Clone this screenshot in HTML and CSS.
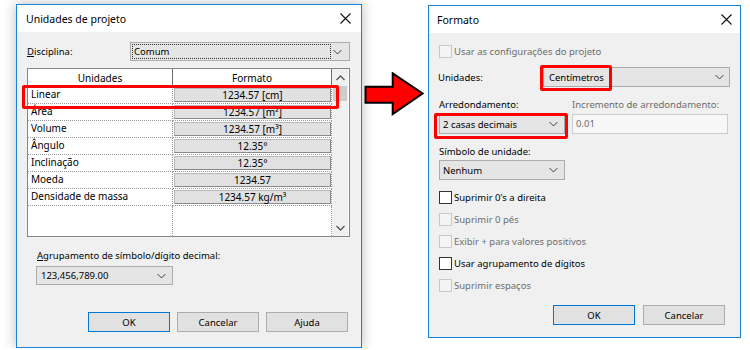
FILE: index.html
```html
<!DOCTYPE html>
<html lang="pt">
<head>
    <meta charset="UTF-8">
    <meta name="viewport" content="width=device-width, initial-scale=1.0">
    <title>Unidades de projeto</title>
    <link rel="stylesheet" href="styles.css">
</head>
<body>
    <div class="stage">

        <!-- Project units dialog -->
        <section class="dialog units-dialog">
            <div class="titlebar">
                <span class="title">Unidades de projeto</span>
                <svg class="close" width="11" height="11" viewBox="0 0 11 11"><path d="M0.5 0.5L10.5 10.5M10.5 0.5L0.5 10.5" stroke="#111" stroke-width="1.1"/></svg>
            </div>
            <div class="units-body">
                <div class="discipline-row">
                    <span class="discipline-label"><u>D</u>isciplina:</span>
                    <div class="select discipline-select">
                        <span class="focus-text">Comum</span>
                        <span class="chevron-box"><svg class="chevron" width="9" height="6" viewBox="0 0 9 6"><path d="M0.5 1L4.5 5L8.5 1" fill="none" stroke="#444"/></svg></span>
                    </div>
                </div>

                <!-- Units table -->
                <div class="grid">
                    <div class="grid-cols">
                        <div class="grid-head">
                            <div class="head-cell name-col">Unidades</div>
                            <div class="head-cell fmt-col">Formato</div>
                        </div>
                        <div class="grid-row"><div class="name-cell">Linear</div><div class="fmt-cell"><span class="fmt-btn">1234.57 [cm]</span></div></div>
                        <div class="grid-row"><div class="name-cell">Área</div><div class="fmt-cell"><span class="fmt-btn">1234.57 [m²]</span></div></div>
                        <div class="grid-row"><div class="name-cell">Volume</div><div class="fmt-cell"><span class="fmt-btn">1234.57 [m³]</span></div></div>
                        <div class="grid-row"><div class="name-cell">Ângulo</div><div class="fmt-cell"><span class="fmt-btn">12.35°</span></div></div>
                        <div class="grid-row"><div class="name-cell">Inclinação</div><div class="fmt-cell"><span class="fmt-btn">12.35°</span></div></div>
                        <div class="grid-row"><div class="name-cell">Moeda</div><div class="fmt-cell"><span class="fmt-btn">1234.57</span></div></div>
                        <div class="grid-row"><div class="name-cell">Densidade de massa</div><div class="fmt-cell"><span class="fmt-btn">1234.57 kg/m³</span></div></div>
                        <div class="grid-fill"><div class="name-cell"></div><div class="fmt-cell"></div></div>
                    </div>
                    <div class="scrollbar">
                        <span class="scroll-btn"><svg width="9" height="6" viewBox="0 0 9 6"><path d="M0.5 5L4.5 1L8.5 5" fill="none" stroke="#555" stroke-width="1.3"/></svg></span>
                        <span class="thumb"></span>
                        <span class="track"></span>
                        <span class="scroll-btn"><svg width="9" height="6" viewBox="0 0 9 6"><path d="M0.5 1L4.5 5L8.5 1" fill="none" stroke="#555" stroke-width="1.3"/></svg></span>
                    </div>
                    <div class="mark linear-mark"></div>
                </div>

                <div class="group-label"><u>A</u>grupamento de símbolo/dígito decimal:</div>
                <div class="select group-select">
                    <span class="select-text">123,456,789.00</span>
                    <svg class="chevron" width="9" height="6" viewBox="0 0 9 6"><path d="M0.5 1L4.5 5L8.5 1" fill="none" stroke="#444"/></svg>
                </div>

                <div class="buttons">
                    <button class="btn default">OK</button>
                    <button class="btn">Cancelar</button>
                    <button class="btn">Ajuda</button>
                </div>
            </div>
        </section>

        <svg class="arrow" width="60" height="44" viewBox="0 0 60 44">
            <polygon points="1.5,14.7 28.7,14.7 28.7,1.3 58.7,21.5 28.7,42 28.7,30.7 1.5,30.7" fill="#f00" stroke="#000" stroke-width="2" stroke-linejoin="miter"/>
        </svg>

        <!-- Format dialog -->
        <section class="dialog format-dialog">
            <div class="titlebar">
                <span class="title">Formato</span>
                <svg class="close" width="11" height="11" viewBox="0 0 11 11"><path d="M0.5 0.5L10.5 10.5M10.5 0.5L0.5 10.5" stroke="#111" stroke-width="1.1"/></svg>
            </div>
            <div class="format-body">
                <label class="check-row first disabled"><span class="box"></span>Usar as configurações do projeto</label>

                <div class="units-row">
                    <span class="units-label">Unidades:</span>
                    <div class="select units-select">
                        <span class="select-text">Centímetros</span>
                        <svg class="chevron" width="9" height="6" viewBox="0 0 9 6"><path d="M0.5 1L4.5 5L8.5 1" fill="none" stroke="#444"/></svg>
                        <div class="mark units-mark"></div>
                    </div>
                </div>

                <div class="round-labels">
                    <span class="col-a">Arredondamento:</span>
                    <span class="col-b muted">Incremento de arredondamento:</span>
                </div>
                <div class="round-inputs">
                    <div class="select col-a round-select">
                        <span class="select-text">2 casas decimais</span>
                        <svg class="chevron" width="9" height="6" viewBox="0 0 9 6"><path d="M0.5 1L4.5 5L8.5 1" fill="none" stroke="#444"/></svg>
                        <div class="mark round-mark"></div>
                    </div>
                    <div class="col-b increment">0.01</div>
                </div>

                <div class="symbol-label">Símbolo de unidade:</div>
                <div class="select symbol-select">
                    <span class="select-text">Nenhum</span>
                    <svg class="chevron" width="9" height="6" viewBox="0 0 9 6"><path d="M0.5 1L4.5 5L8.5 1" fill="none" stroke="#444"/></svg>
                </div>

                <div class="checks">
                    <label class="check-row"><span class="box"></span>Suprimir 0's a direita</label>
                    <label class="check-row disabled"><span class="box"></span>Suprimir 0 pés</label>
                    <label class="check-row disabled"><span class="box"></span>Exibir + para valores positivos</label>
                    <label class="check-row"><span class="box"></span>Usar agrupamento de dígitos</label>
                    <label class="check-row disabled"><span class="box"></span>Suprimir espaços</label>
                </div>

                <div class="buttons format-buttons">
                    <button class="btn default">OK</button>
                    <button class="btn">Cancelar</button>
                </div>
            </div>
        </section>

    </div>
</body>
</html>
```

FILE: styles.css
```css
/* Windows style dialogs */
body {
    margin: 0;
    background: #fff;
    font-family: "Noto Sans", "Open Sans", sans-serif;
    font-size: 9.5px;
    color: #000;
}

.stage {
    display: flex;
    align-items: flex-start;
    padding: 4px 0 0 16px;
}

.dialog {
    box-sizing: border-box;
    display: flex;
    flex-direction: column;
    background: #f0f0f0;
    border: 1px solid #1883d7;
}

.units-dialog {
    width: 346px;
    height: 344px;
    box-shadow: 0 0 12px rgba(0, 0, 0, 0.28);
}

.format-dialog {
    width: 313px;
    height: 333px;
    margin: 1px 0 0 4px;
}

.titlebar {
    height: 27px;
    flex-shrink: 0;
    display: flex;
    align-items: center;
    justify-content: space-between;
    padding: 0 10px 0 9px;
    background: #fff;
}

.title {
    font-size: 10.5px;
}

.format-dialog .titlebar {
    padding: 0 8px 0 8px;
}

.arrow {
    margin: 68px 0 0 2px;
}

/* selects */
.select {
    box-sizing: border-box;
    display: flex;
    align-items: center;
    height: 20px;
    background: #e5e5e5;
    border: 1px solid #acacac;
    position: relative;
}

.select-text {
    flex: 1;
    padding-left: 4px;
    white-space: nowrap;
}

.select .chevron {
    margin-right: 6px;
}

/* units dialog body */
.units-body {
    display: flex;
    flex-direction: column;
    padding: 10px 11px 0 10px;
}

.discipline-row {
    display: flex;
    align-items: center;
}

.discipline-label {
    width: 103px;
}

.discipline-select {
    flex: 1;
    height: 19px;
}

.focus-text {
    flex: 1;
    align-self: stretch;
    margin: 1px 0 1px 1px;
    border: 1px dotted #333;
    padding-left: 1px;
    line-height: 13px;
}

.chevron-box {
    width: 18px;
    display: flex;
    justify-content: center;
}

.grid {
    position: relative;
    box-sizing: border-box;
    display: flex;
    height: 169px;
    margin-top: 7px;
    background: #fff;
    border: 1px solid #828790;
}

.grid-cols {
    display: flex;
    flex-direction: column;
}

.grid-head {
    display: flex;
    height: 18px;
}

.head-cell {
    box-sizing: border-box;
    display: flex;
    align-items: center;
    justify-content: center;
    border-right: 1px solid #6e6e6e;
    border-bottom: 1px solid #e5e5e5;
    font-size: 10px;
}

.name-col,
.name-cell {
    width: 145px;
}

.fmt-col,
.fmt-cell {
    width: 159px;
}

.grid-row {
    display: flex;
    height: 17px;
}

.name-cell,
.fmt-cell {
    box-sizing: border-box;
    border-right: 1px dotted #9a9a9a;
    border-bottom: 1px dotted #9a9a9a;
}

.name-cell {
    padding-left: 3px;
    line-height: 15px;
    font-size: 10px;
}

.fmt-cell {
    display: flex;
    padding: 1px 0 0 1px;
}

.fmt-btn {
    box-sizing: border-box;
    flex: 1;
    height: 14px;
    background: #e1e1e1;
    border: 1px solid #b9b9b9;
    border-right-color: #8a8a8a;
    border-bottom-color: #8a8a8a;
    text-align: center;
    line-height: 12px;
    font-size: 10px;
}

.grid-fill {
    flex: 1;
    display: flex;
}

.grid-fill .name-cell,
.grid-fill .fmt-cell {
    border-bottom: none;
}

.scrollbar {
    width: 16px;
    display: flex;
    flex-direction: column;
    background: #f0f0f0;
}

.scroll-btn {
    height: 17px;
    display: flex;
    align-items: center;
    justify-content: center;
}

.thumb {
    height: 15px;
    background: #cdcdcd;
    margin: 0 1px;
}

.track {
    flex: 1;
}

/* red highlight frames */
.mark {
    position: absolute;
    box-sizing: border-box;
    border: 3px solid #f00;
    border-radius: 2px;
}

.linear-mark {
    left: -6px;
    top: 16px;
    width: 317px;
    height: 24px;
}

.units-mark {
    left: -4px;
    top: -3px;
    width: 72px;
    height: 26px;
}

.round-mark {
    left: -6px;
    top: -2px;
    width: 134px;
    height: 26px;
}

.group-label {
    margin-top: 12px;
    padding-left: 10px;
    line-height: 13px;
}

.group-select {
    width: 137px;
    height: 19px;
    margin: 4px 0 0 9px;
}

.buttons {
    display: flex;
    justify-content: flex-end;
    gap: 7px;
    margin-top: 27px;
    padding-right: 2px;
}

.btn {
    box-sizing: border-box;
    width: 82px;
    height: 20px;
    padding: 0;
    background: #e1e1e1;
    border: 1px solid #adadad;
    font-family: inherit;
    font-size: 9.5px;
    color: #000;
}

.btn.default {
    border-color: #0078d7;
}

/* format dialog body */
.format-body {
    display: flex;
    flex-direction: column;
    padding: 7px 10px 0 10px;
}

.check-row {
    display: flex;
    align-items: center;
    gap: 2px;
    height: 22px;
}

.box {
    box-sizing: border-box;
    width: 13px;
    height: 13px;
    background: #fff;
    border: 1px solid #333;
}

.disabled {
    color: #6d6d6d;
}

.disabled .box {
    background: #f4f4f4;
    border-color: #c8c8c8;
}

.muted {
    color: #6d6d6d;
}

.units-row {
    display: flex;
    align-items: center;
    margin-top: 5px;
}

.units-label {
    width: 105px;
    margin-left: -1px;
}

.units-select {
    flex: 1;
}

.units-select .select-text {
    padding-left: 5px;
}

.units-select .chevron {
    margin-right: 5px;
}

.round-labels,
.round-inputs {
    display: flex;
}

.round-labels {
    margin-top: 11px;
    line-height: 13px;
}

.round-inputs {
    margin-top: 3px;
}

.col-a {
    width: 126px;
    flex-shrink: 0;
}

.col-b {
    margin-left: 7px;
}

.round-select .select-text {
    padding-left: 3px;
}

.increment {
    box-sizing: border-box;
    width: 156px;
    height: 20px;
    padding-left: 3px;
    line-height: 18px;
    color: #6d6d6d;
    background: #f7f7f7;
    border: 1px solid #cccccc;
}

.symbol-label {
    margin-top: 11px;
    line-height: 13px;
}

.symbol-select {
    width: 126px;
    margin-top: 2px;
}

.symbol-select .select-text {
    padding-left: 3px;
}

.checks {
    display: flex;
    flex-direction: column;
    margin-top: 6px;
}

.format-buttons {
    gap: 8px;
    margin-top: 9px;
    padding-right: 5px;
}
```
